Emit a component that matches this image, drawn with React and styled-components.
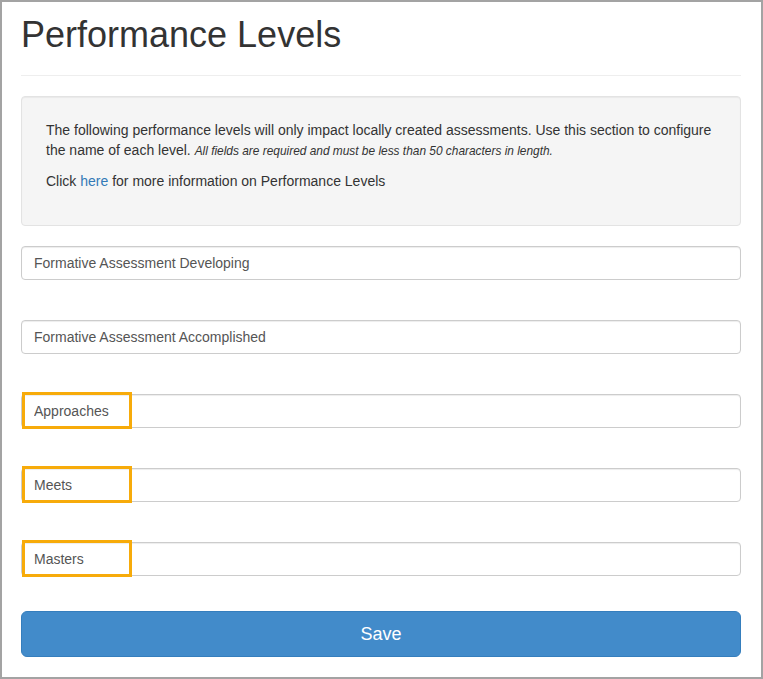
import React from 'react';
import styled, { createGlobalStyle } from 'styled-components';

const GlobalStyle = createGlobalStyle`
  html, body {
    margin: 0;
    padding: 0;
    background: #fff;
  }
  body {
    font-family: "Liberation Sans", Arial, Helvetica, sans-serif;
    font-size: 14px;
    color: #333;
  }
  * {
    box-sizing: border-box;
  }
`;

const Frame = styled.div`
  width: 763px;
  height: 679px;
  border: 2px solid #a3a3a3;
  padding: 13px 20px 0 19px;
  display: flex;
  flex-direction: column;
`;

const PageHeader = styled.div`
  padding-bottom: 20px;
  border-bottom: 1px solid #eee;
  margin-bottom: 20px;
`;

const Title = styled.h1`
  margin: 0;
  font-size: 36px;
  line-height: 40px;
  font-weight: 400;
  color: #333;
`;

const Well = styled.div`
  height: 130px;
  padding: 23px 24px 0;
  background: #f5f5f5;
  border: 1px solid #e3e3e3;
  border-radius: 4px;
  box-shadow: inset 0 1px 1px rgba(0, 0, 0, 0.05);
  margin-bottom: 20px;
`;

const Para = styled.p`
  margin: 0 0 10px;
  line-height: 20px;
  color: #333;
`;

const Note = styled.small`
  font-size: 11.9px;
  font-style: italic;
`;

const Link = styled.a`
  color: #337ab7;
  text-decoration: none;
`;

const Fields = styled.div`
  display: flex;
  flex-direction: column;
  gap: 40px;
`;

const FieldRow = styled.div`
  position: relative;
`;

const TextInput = styled.input`
  display: block;
  width: 100%;
  height: 34px;
  padding: 6px 12px;
  font-family: inherit;
  font-size: 14px;
  color: #555;
  background: #fff;
  border: 1px solid #ccc;
  border-radius: 4px;
  box-shadow: inset 0 1px 1px rgba(0, 0, 0, 0.075);
  outline: none;
`;

const Highlight = styled.span`
  position: absolute;
  left: 1px;
  top: -2px;
  width: 110px;
  height: 37px;
  border: 3px solid #f7ab0a;
  pointer-events: none;
`;

const SaveButton = styled.button`
  margin-top: 35px;
  width: 100%;
  height: 46px;
  font-family: inherit;
  font-size: 18px;
  color: #fff;
  background: #428bca;
  border: 1px solid #357ebd;
  border-radius: 6px;
  cursor: pointer;
`;

const levels = [
  { name: 'Formative Assessment Developing' },
  { name: 'Formative Assessment Accomplished' },
  { name: 'Approaches', marked: true },
  { name: 'Meets', marked: true },
  { name: 'Masters', marked: true },
];

export default function App() {
  return (
    <>
      <GlobalStyle />
      <Frame>
        <PageHeader>
          <Title>Performance Levels</Title>
        </PageHeader>
        <Well>
          <Para>
            The following performance levels will only impact locally created assessments. Use this section to configure
            the name of each level. <Note>All fields are required and must be less than 50 characters in length.</Note>
          </Para>
          <Para>
            Click <Link href="#">here</Link> for more information on Performance Levels
          </Para>
        </Well>
        <Fields>
          {levels.map((level) => (
            <FieldRow key={level.name}>
              <TextInput type="text" defaultValue={level.name} />
              {level.marked && <Highlight />}
            </FieldRow>
          ))}
        </Fields>
        <SaveButton type="button">Save</SaveButton>
      </Frame>
    </>
  );
}
